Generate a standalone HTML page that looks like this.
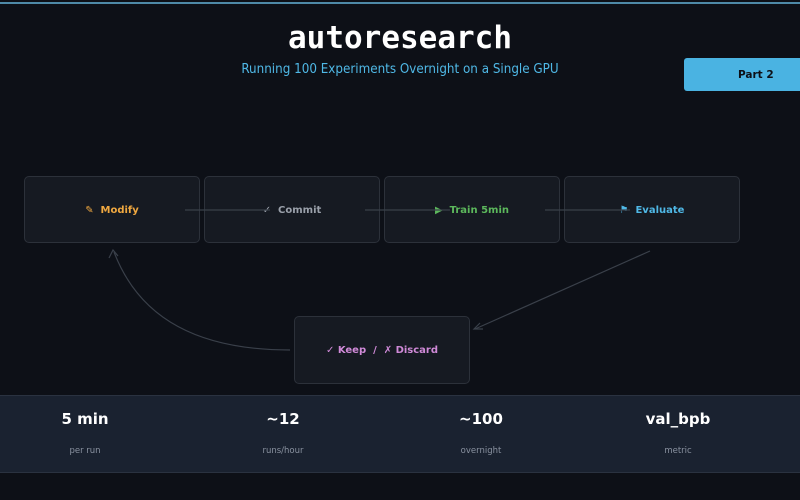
<!DOCTYPE html>
<html><head><style>
body{margin:0;width:800px;height:500px;background:#0d1017;overflow:hidden;position:relative;font-family:"DejaVu Sans","Liberation Sans",sans-serif}
.top{position:absolute;left:0;top:2px;width:800px;height:2px;background:#4e8aa8}
h1{position:absolute;top:20px;left:0;width:800px;text-align:center;margin:0;font:bold 31px "DejaVu Sans Mono","Liberation Mono",monospace;color:#fff}
.sub{position:absolute;top:62px;left:0;width:800px;text-align:center;font-size:13.3px;color:#4fb8e6;font-family:"DejaVu Sans Condensed","DejaVu Sans",sans-serif}
.part{position:absolute;left:684px;top:58px;width:130px;height:33px;background:#4ab3e2;border-radius:3px;font-weight:bold;font-size:10.5px;color:#0d1017;line-height:35px;padding-left:54px;box-sizing:border-box}
.box{position:absolute;width:176px;height:67px;background:#161a22;border:1px solid #2c313a;border-radius:5px;box-sizing:border-box;text-align:center;line-height:67px;font-weight:bold;font-size:10px}
.band{position:absolute;left:0;top:395px;width:800px;height:78px;background:#1a2230;border-top:1px solid #2a3240;border-bottom:1px solid #2a3240;box-sizing:border-box}
.st{position:absolute;top:410px;width:200px;text-align:center}
.st b{display:block;color:#fff;font-size:15px}
.st span{display:block;color:#8a92a0;font-size:8.5px;margin-top:18px}
</style></head><body>
<div class="top"></div>
<h1>autoresearch</h1>
<div class="sub">Running 100 Experiments Overnight on a Single GPU</div>
<div class="part">Part 2</div>
<div class="box" style="left:24px;top:176px;color:#f0a840">✎&nbsp; Modify</div>
<div class="box" style="left:204px;top:176px;color:#9aa0aa">✓&nbsp; Commit</div>
<div class="box" style="left:384px;top:176px;color:#5cb85c">▶&nbsp; Train 5min</div>
<div class="box" style="left:564px;top:176px;color:#4fb8e6">⚑&nbsp; Evaluate</div>
<div class="box" style="left:294px;top:316px;height:68px;line-height:68px;color:#d08ad8">✓ Keep&nbsp; /&nbsp; ✗ Discard</div>
<svg style="position:absolute;left:0;top:0" width="800" height="500">
<g stroke="#3a404a" stroke-width="1.2" fill="none">
<line x1="185" y1="210" x2="270" y2="210"/>
<line x1="365" y1="210" x2="450" y2="210"/>
<line x1="545" y1="210" x2="630" y2="210"/>
<path d="M290 350 C200 350 140 320 114 252"/>
<path d="M109 258 L113 250 L118 256"/>
<line x1="650" y1="251" x2="475" y2="329"/>
<path d="M480 323 L474 329 L483 329"/>
</g></svg>
<div class="band"></div>
<div class="st" style="left:-15px"><b>5 min</b><span>per run</span></div>
<div class="st" style="left:183px"><b>~12</b><span>runs/hour</span></div>
<div class="st" style="left:381px"><b>~100</b><span>overnight</span></div>
<div class="st" style="left:578px"><b>val_bpb</b><span>metric</span></div>
</body></html>
